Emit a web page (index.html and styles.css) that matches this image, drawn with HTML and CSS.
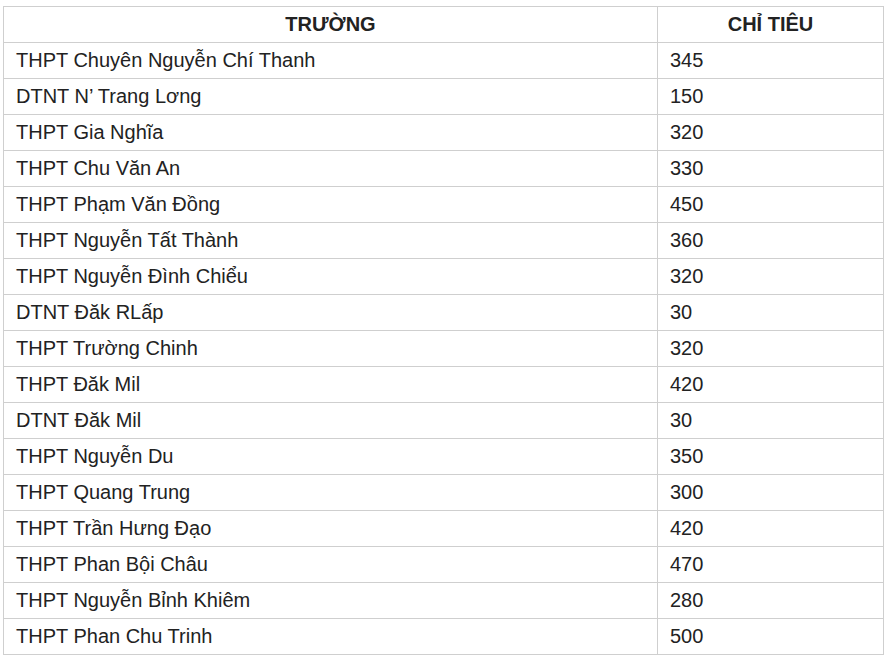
FILE: index.html
```html
<!DOCTYPE html>
<html lang="vi">
<head>
<meta charset="utf-8">
<title>Chỉ tiêu</title>
<link rel="stylesheet" href="styles.css">
</head>
<body>
<div class="wrap">
<table class="quota">
<colgroup><col class="c-school"><col class="c-num"></colgroup>
<thead>
<tr><th>TRƯỜNG</th><th>CHỈ TIÊU</th></tr>
</thead>
<tbody>
<tr><td>THPT Chuyên Nguyễn Chí Thanh</td><td>345</td></tr>
<tr><td>DTNT N’ Trang Lơng</td><td>150</td></tr>
<tr><td>THPT Gia Nghĩa</td><td>320</td></tr>
<tr><td>THPT Chu Văn An</td><td>330</td></tr>
<tr><td>THPT Phạm Văn Đồng</td><td>450</td></tr>
<tr><td>THPT Nguyễn Tất Thành</td><td>360</td></tr>
<tr><td>THPT Nguyễn Đình Chiểu</td><td>320</td></tr>
<tr><td>DTNT Đăk RLấp</td><td>30</td></tr>
<tr><td>THPT Trường Chinh</td><td>320</td></tr>
<tr><td>THPT Đăk Mil</td><td>420</td></tr>
<tr><td>DTNT Đăk Mil</td><td>30</td></tr>
<tr><td>THPT Nguyễn Du</td><td>350</td></tr>
<tr><td>THPT Quang Trung</td><td>300</td></tr>
<tr><td>THPT Trần Hưng Đạo</td><td>420</td></tr>
<tr><td>THPT Phan Bội Châu</td><td>470</td></tr>
<tr><td>THPT Nguyễn Bỉnh Khiêm</td><td>280</td></tr>
<tr><td>THPT Phan Chu Trinh</td><td>500</td></tr>
</tbody>
</table>
</div>
</body>
</html>
```

FILE: styles.css
```css
html, body {
  margin: 0;
  padding: 0;
  background: #fff;
}
.wrap {
  padding: 6px 0 0 3px;
}
.quota {
  border-collapse: collapse;
  width: 880px;
  table-layout: fixed;
  font-family: "Liberation Sans", Arial, sans-serif;
  font-size: 20px;
  color: #222;
}
.c-school { width: 654px; }
.c-num { width: 226px; }
.quota th, .quota td {
  border: 1px solid #cfcfcf;
  height: 36px;
  padding: 0 12px 2px;
  line-height: 24px;
  box-sizing: border-box;
  vertical-align: middle;
}
.quota th {
  font-weight: bold;
  text-align: center;
}
.quota td {
  text-align: left;
}
```
